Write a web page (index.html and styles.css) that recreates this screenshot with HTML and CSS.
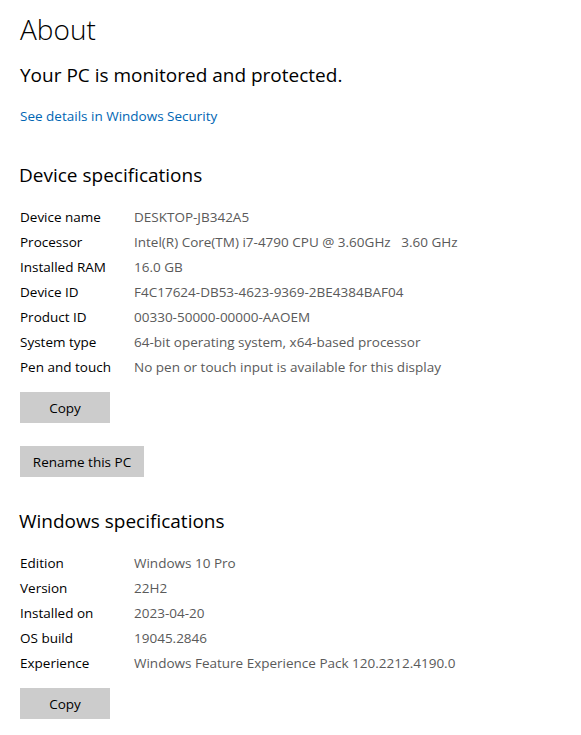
FILE: index.html
```html
<!DOCTYPE html>
<html>
<head>
<meta charset="utf-8">
<link rel="stylesheet" href="styles.css">
</head>
<body>
<main class="page">
  <h1 class="title">About</h1>
  <p class="status">Your PC is monitored and protected.</p>
  <a class="link" href="#">See details in Windows Security</a>

  <h2 class="section">Device specifications</h2>
  <dl class="specs">
    <dt>Device name</dt><dd>DESKTOP-JB342A5</dd>
    <dt>Processor</dt><dd>Intel(R) Core(TM) i7-4790 CPU @ 3.60GHz&nbsp;&nbsp;&nbsp;3.60 GHz</dd>
    <dt>Installed RAM</dt><dd>16.0 GB</dd>
    <dt>Device ID</dt><dd>F4C17624-DB53-4623-9369-2BE4384BAF04</dd>
    <dt>Product ID</dt><dd>00330-50000-00000-AAOEM</dd>
    <dt>System type</dt><dd>64-bit operating system, x64-based processor</dd>
    <dt>Pen and touch</dt><dd>No pen or touch input is available for this display</dd>
  </dl>
  <button class="btn btn-copy">Copy</button>
  <button class="btn btn-rename">Rename this PC</button>

  <h2 class="section section-win">Windows specifications</h2>
  <dl class="specs">
    <dt>Edition</dt><dd>Windows 10 Pro</dd>
    <dt>Version</dt><dd>22H2</dd>
    <dt>Installed on</dt><dd>2023-04-20</dd>
    <dt>OS build</dt><dd>19045.2846</dd>
    <dt>Experience</dt><dd>Windows Feature Experience Pack 120.2212.4190.0</dd>
  </dl>
  <button class="btn btn-copy">Copy</button>
</main>
</body>
</html>
```
FILE: styles.css
```css
html, body {
  margin: 0;
  padding: 0;
  background: #ffffff;
}
body {
  font-family: "Open Sans", "Noto Sans", "Liberation Sans", sans-serif;
  color: #000;
}
.page {
  padding: 10px 20px 0 20px;
  display: flex;
  flex-direction: column;
  align-items: flex-start;
}
.title {
  margin: 0;
  font-weight: 300;
  font-size: 28px;
  line-height: 38px;
}
.status {
  margin: 14px 0 0 0;
  font-weight: 400;
  font-size: 19px;
  line-height: 26px;
}
.link {
  margin-top: 18px;
  font-size: 13.5px;
  line-height: 20px;
  color: #0066b4;
  text-decoration: none;
}
.section {
  margin: 36px 0 0 -1px;
  font-weight: 400;
  font-size: 19px;
  line-height: 26px;
}
.section-win {
  margin-top: 31px;
}
.specs {
  margin: 17px 0 0 0;
  display: grid;
  grid-template-columns: 114px auto;
  row-gap: 0;
  font-size: 13.5px;
  line-height: 25px;
}
.specs dt {
  color: #000;
}
.specs dd {
  margin: 0;
  color: #5a5a5a;
}
.btn {
  font-family: inherit;
  font-size: 13.5px;
  border: none;
  background: #cccccc;
  color: #000;
  height: 31px;
  padding: 0;
  white-space: nowrap;
}
.btn-copy {
  width: 90px;
  margin-top: 12px;
}
.btn-rename {
  margin-top: 23px;
  width: 124px;
}
```
